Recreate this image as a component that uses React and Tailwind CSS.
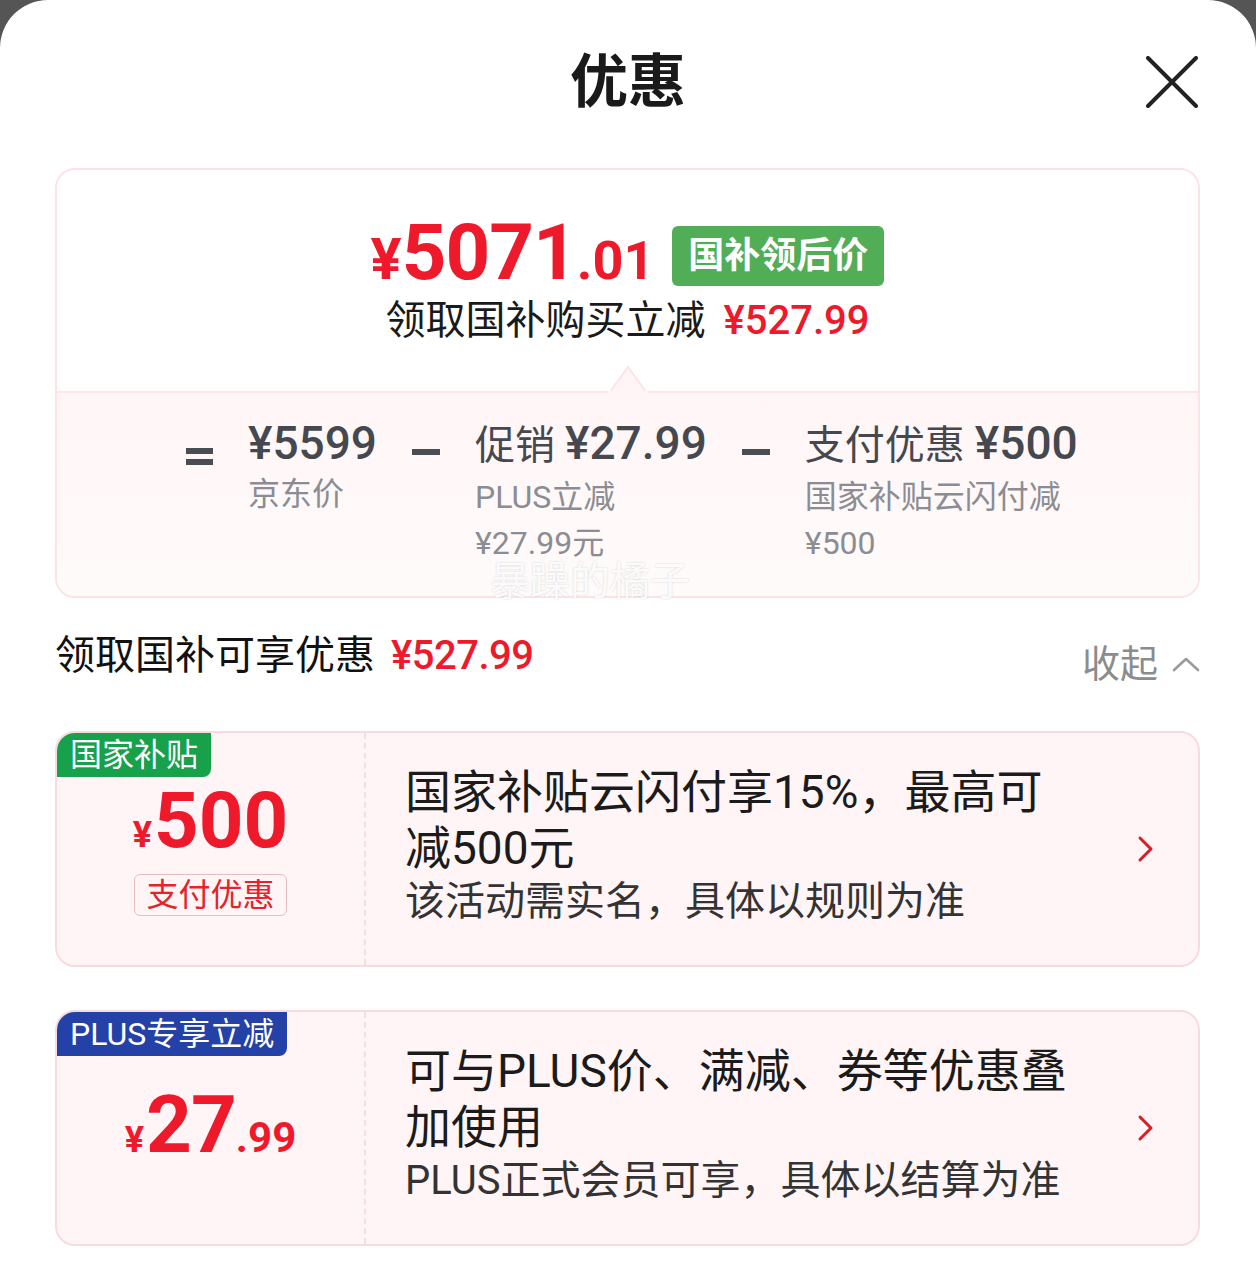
import React from 'react';

const FONT = { fontFamily: "Roboto, 'Noto Sans CJK SC', sans-serif" };

const CloseIcon = () => (
    <svg width="52" height="52" viewBox="0 0 52 52" fill="none">
        <path d="M2 2 L50 50 M50 2 L2 50" stroke="#222" strokeWidth="4" strokeLinecap="round" />
    </svg>
);

const ChevronUp = () => (
    <svg width="28" height="18" viewBox="0 0 28 18" fill="none">
        <polyline points="2,15 14,4 26,15" stroke="#9a9a9a" strokeWidth="2.6" strokeLinecap="round" strokeLinejoin="round" />
    </svg>
);

const ChevronRight = () => (
    <svg width="18" height="28" viewBox="0 0 18 28" fill="none">
        <polyline points="3,3 14,14 3,25" stroke="#d81e25" strokeWidth="3" strokeLinecap="round" strokeLinejoin="round" />
    </svg>
);

// simple bar glyphs for the "=" and "-" in the breakdown
const Equals = () => (
    <div className="flex flex-col gap-[5px] pt-[33px]">
        <div className="w-[27px] h-[6px] bg-[#4a4d53]" />
        <div className="w-[27px] h-[6px] bg-[#4a4d53]" />
    </div>
);

const Minus = () => (
    <div className="pt-[34px]">
        <div className="w-[28px] h-[6px] bg-[#4a4d53]" />
    </div>
);

const OfferCard = ({ tag, tagClass, amount, children }) => (
    <div className="relative flex h-[236px] rounded-[20px] border-2 border-[#f8dbe0] bg-[#fff5f6] overflow-hidden">
        <div className={`absolute left-0 top-0 h-[44px] flex items-center px-[13px] rounded-br-[8px] text-white text-[32px] leading-[44px] ${tagClass}`}>
            {tag}
        </div>
        <div className="w-[309px] flex flex-col items-center justify-center border-r-2 border-dashed border-[#f3dfe2]">
            {amount}
        </div>
        <div className="flex-1 flex items-center pl-[39px] pr-[43px]">
            <div className="flex-1 -mt-[6px]">{children}</div>
            <ChevronRight />
        </div>
    </div>
);

export default function App() {
    return (
        <div className="bg-[#555555] w-[1256px] h-[1262px]" style={FONT}>
            <div className="bg-white w-full h-full rounded-t-[48px] overflow-hidden">
                {/* Header */}
                <div className="relative flex justify-center pt-[50px]">
                    <h1 className="text-[58px] leading-[64px] font-bold text-[#1a1a1a]">优惠</h1>
                    <button className="absolute right-[58px] top-[56px]">
                        <CloseIcon />
                    </button>
                </div>

                <div className="px-[55px] pr-[56px]">
                    {/* Summary card */}
                    <div className="relative mt-[54px] rounded-[20px] border-2 border-[#fce3e6]">
                        <div className="relative h-[223px] rounded-t-[18px] border-b-2 border-[#fce6e9] pt-[44px] flex flex-col items-center">
                            <div className="flex items-center">
                                <div className="flex items-baseline text-[#ee1a2c] font-bold">
                                    <span className="text-[58px] leading-[56px]">¥</span>
                                    <span className="text-[78px] leading-[78px] tracking-[-1px]">5071</span>
                                    <span className="text-[54px] leading-[56px]">.01</span>
                                </div>
                                <div className="ml-[18px] mt-[6px] h-[60px] px-[16px] rounded-[6px] bg-[#52ad57] text-white text-[36px] leading-[60px] font-bold">
                                    国补领后价
                                </div>
                            </div>
                            <div className="mt-[5px] flex items-center text-[40px] leading-[48px]">
                                <span className="text-[#1a1a1a]">领取国补购买立减</span>
                                <span className="ml-[18px] text-[#ee1a2c] font-medium">¥527.99</span>
                            </div>
                            <svg className="absolute left-1/2 -translate-x-1/2 -bottom-[2px]" width="40" height="28" viewBox="0 0 40 28" fill="none">
                                <polygon points="2,27 20,2 38,27" fill="#fff5f6" stroke="#fce3e6" strokeWidth="2" />
                                <rect x="0" y="26" width="40" height="2" fill="#fff5f6" />
                            </svg>
                        </div>
                        <div className="h-[203px] rounded-b-[18px] bg-gradient-to-b from-[#fff5f6] to-[#fffbfb] pt-[22px] pl-[129px] flex gap-[35px]">
                            <Equals />
                            <div>
                                <div className="text-[46px] leading-[56px] font-medium text-[#45484e]">¥5599</div>
                                <div className="text-[32px] leading-[46px] text-[#8a8d93]">京东价</div>
                            </div>
                            <Minus />
                            <div>
                                <div className="flex items-baseline text-[#45484e] leading-[56px]">
                                    <span className="text-[40px]">促销</span>
                                    <span className="ml-[10px] text-[46px] font-medium">¥27.99</span>
                                </div>
                                <div className="text-[32px] leading-[46px] text-[#8a8d93]">PLUS立减</div>
                                <div className="text-[32px] leading-[46px] text-[#8a8d93]">¥27.99元</div>
                            </div>
                            <Minus />
                            <div>
                                <div className="flex items-baseline text-[#45484e] leading-[56px]">
                                    <span className="text-[40px]">支付优惠</span>
                                    <span className="ml-[10px] text-[46px] font-medium">¥500</span>
                                </div>
                                <div className="text-[32px] leading-[46px] text-[#8a8d93]">国家补贴云闪付减</div>
                                <div className="text-[32px] leading-[46px] text-[#8a8d93]">¥500</div>
                            </div>
                        </div>
                        <div className="absolute left-[433px] top-[392px] text-[40px] leading-[40px] text-white/90 [text-shadow:0_0_2px_rgba(0,0,0,0.18)]">
                            暴躁的橘子
                        </div>
                    </div>

                    {/* Section heading */}
                    <div className="mt-[28px] flex justify-between">
                        <div className="flex items-center text-[40px] leading-[48px]">
                            <span className="text-[#111]">领取国补可享优惠</span>
                            <span className="ml-[16px] text-[#ee1a2c] font-medium tracking-[-0.5px]">¥527.99</span>
                        </div>
                        <div className="flex items-center gap-[14px] pt-[16px] text-[38px] leading-[44px] text-[#8c8c8c]">
                            <span>收起</span>
                            <ChevronUp />
                        </div>
                    </div>

                    {/* Offer cards */}
                    <div className="mt-[45px] flex flex-col gap-[43px]">
                        <OfferCard
                            tag="国家补贴"
                            tagClass="bg-[#17a14b]"
                            amount={
                                <>
                                    <div className="flex items-baseline text-[#ee1a2c] font-bold">
                                        <span className="text-[36px] leading-[36px]">¥</span>
                                        <span className="ml-[2px] text-[78px] leading-[78px]">500</span>
                                    </div>
                                    <div className="mt-[14px] h-[42px] px-[11px] rounded-[6px] border border-[#e9bcc0] text-[#e3242b] text-[32px] leading-[40px]">
                                        支付优惠
                                    </div>
                                </>
                            }
                        >
                            <div className="text-[46px] leading-[56px] text-[#1b1b1b]">国家补贴云闪付享15%，最高可</div>
                            <div className="text-[46px] leading-[56px] text-[#1b1b1b]">减500元</div>
                            <div className="text-[40px] leading-[52px] text-[#333]">该活动需实名，具体以规则为准</div>
                        </OfferCard>

                        <OfferCard
                            tag="PLUS专享立减"
                            tagClass="bg-[#2341a6]"
                            amount={
                                <div className="flex items-baseline text-[#ee1a2c] font-bold -mt-[6px]">
                                    <span className="text-[36px] leading-[36px]">¥</span>
                                    <span className="ml-[2px] text-[80px] leading-[80px] tracking-[-1px]">27</span>
                                    <span className="text-[42px] leading-[42px]">.99</span>
                                </div>
                            }
                        >
                            <div className="text-[46px] leading-[56px] text-[#1b1b1b]">可与PLUS价、满减、券等优惠叠</div>
                            <div className="text-[46px] leading-[56px] text-[#1b1b1b]">加使用</div>
                            <div className="text-[40px] leading-[52px] text-[#333]">PLUS正式会员可享，具体以结算为准</div>
                        </OfferCard>
                    </div>
                </div>
            </div>
        </div>
    );
}
